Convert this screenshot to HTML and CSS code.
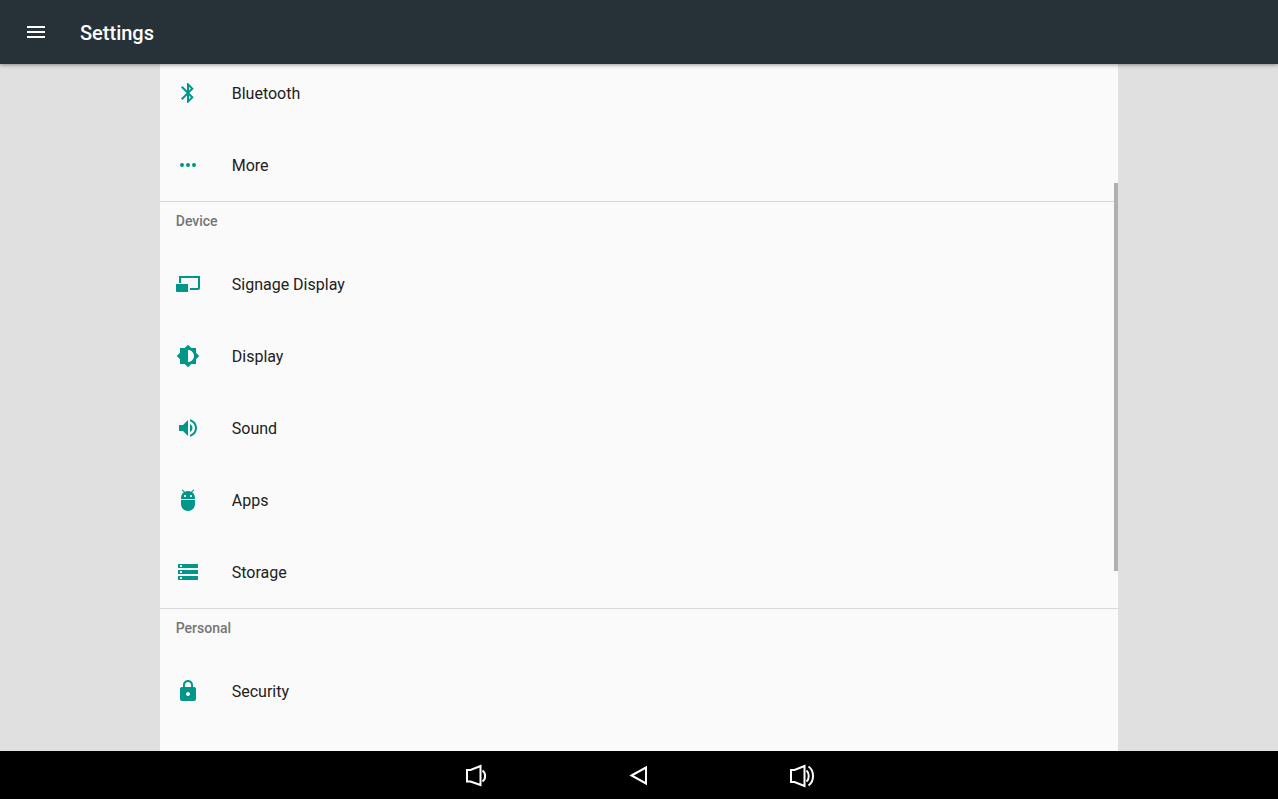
FILE: index.html
```html
<!DOCTYPE html>
<html lang="en">
<head>
    <meta charset="UTF-8">
    <meta name="viewport" content="width=device-width, initial-scale=1.0">
    <title>Settings</title>
    <link rel="stylesheet" href="styles.css">
</head>
<body>
    <header class="toolbar">
        <button class="menu-btn" type="button" aria-label="Open menu">
            <svg viewBox="0 0 24 24"><path d="M3 18h18v-2H3v2zm0-5h18v-2H3v2zm0-7v2h18V6H3z"/></svg>
        </button>
        <h1>Settings</h1>
    </header>

    <main class="content">
        <div class="panel">
            <div class="list">
                <section class="group">
                    <a class="row" href="#bluetooth">
                        <svg viewBox="0 0 24 24"><path d="M17.71 7.71L12 2h-1v7.59L6.41 5 5 6.41 10.59 12 5 17.59 6.41 19 11 14.41V22h1l5.71-5.71-4.3-4.29 4.3-4.29zM13 5.83l1.88 1.88L13 9.59V5.83zm1.88 10.46L13 18.17v-3.76l1.88 1.88z"/></svg>
                        <span>Bluetooth</span>
                    </a>
                    <a class="row" href="#more">
                        <svg viewBox="0 0 24 24"><circle cx="6" cy="12" r="2"/><circle cx="12" cy="12" r="2"/><circle cx="18" cy="12" r="2"/></svg>
                        <span>More</span>
                    </a>
                </section>

                <section class="group">
                    <h2>Device</h2>
                    <a class="row" href="#signage-display">
                        <svg viewBox="0 0 24 24"><path d="M3 4h21v12a2 2 0 0 1-2 2h-8v-2h8V6H5v5H3z"/><path d="M0 12h12v8H1a1 1 0 0 1-1-1z"/></svg>
                        <span>Signage Display</span>
                    </a>
                    <a class="row" href="#display">
                        <svg viewBox="0 0 24 24"><path d="M20 15.310L23.310 12 20 8.690V4h-4.690L12 .690 8.690 4H4v4.690L.690 12 4 15.310V20h4.690L12 23.310 15.310 20H20v-4.690zM12 18V6c3.310 0 6 2.690 6 6s-2.690 6-6 6z"/></svg>
                        <span>Display</span>
                    </a>
                    <a class="row" href="#sound">
                        <svg viewBox="0 0 24 24"><path d="M3 9v6h4l5 5V4L7 9H3zm13.500 3c0-1.770-1.020-3.290-2.500-4.030v8.050c1.480-.730 2.500-2.250 2.500-4.020zM14 3.230v2.060c2.890.860 5 3.540 5 6.710s-2.110 5.850-5 6.710v2.060c4.010-.910 7-4.490 7-8.770s-2.990-7.860-7-8.770z"/></svg>
                        <span>Sound</span>
                    </a>
                    <a class="row" href="#apps">
                        <svg viewBox="0 0 24 24"><path d="M5 16c0 3.870 3.130 7 7 7s7-3.130 7-7v-4H5v4zM16.120 4.370l2.100-2.100-.820-.830-2.300 2.310C14.160 3.280 13.120 3 12 3s-2.160.280-3.090.750L6.600 1.440l-.820.830 2.100 2.100C6.140 5.640 5 7.680 5 10v1h14v-1c0-2.320-1.140-4.360-2.880-5.630zM9 9c-.550 0-1-.450-1-1s.450-1 1-1 1 .450 1 1-.450 1-1 1zm6 0c-.550 0-1-.450-1-1s.450-1 1-1 1 .450 1 1-.450 1-1 1z"/></svg>
                        <span>Apps</span>
                    </a>
                    <a class="row" href="#storage">
                        <svg viewBox="0 0 24 24"><path d="M2 20h20v-4H2v4zm2-3h2v2H4v-2zM2 4v4h20V4H2zm4 3H4V5h2v2zm-4 7h20v-4H2v4zm2-3h2v2H4v-2z"/></svg>
                        <span>Storage</span>
                    </a>
                </section>

                <section class="group">
                    <h2>Personal</h2>
                    <a class="row" href="#security">
                        <svg viewBox="0 0 24 24"><path d="M18 8h-1V6c0-2.760-2.240-5-5-5S7 3.240 7 6v2H6c-1.100 0-2 .900-2 2v10c0 1.100.900 2 2 2h12c1.100 0 2-.900 2-2V10c0-1.100-.900-2-2-2zm-6 9c-1.100 0-2-.900-2-2s.900-2 2-2 2 .900 2 2-.900 2-2 2zm3.100-9H8.900V6c0-1.710 1.390-3.100 3.100-3.100 1.710 0 3.100 1.390 3.100 3.100v2z"/></svg>
                        <span>Security</span>
                    </a>
                </section>
            </div>
            <div class="scroll-thumb"></div>
        </div>
    </main>

    <nav class="navbar">
        <button type="button" aria-label="Volume down">
            <svg viewBox="0 0 28 28"><path d="M5 8h3.500L18.500 4v19L8.500 19.500H5z"/><path class="wave" d="M20.500 8.500c3.500 2.500 3.500 8.500 0 11"/></svg>
        </button>
        <button type="button" aria-label="Back">
            <svg viewBox="0 0 28 28"><path d="M6.500 13.500L21 5.500v16z"/></svg>
        </button>
        <button type="button" aria-label="Volume up">
            <svg viewBox="0 0 28 28"><path d="M3 8h3.500L16.500 4v20L6.500 20H3z"/><path class="wave" d="M18.500 8.500c3 2.500 3 8.500 0 11M20.500 4.500c6 4 6 15 0 19"/></svg>
        </button>
    </nav>
</body>
</html>
```

FILE: styles.css
```css
* {
    margin: 0;
    padding: 0;
    box-sizing: border-box;
}

body {
    display: flex;
    flex-direction: column;
    height: 100vh;
    overflow: hidden;
    font-family: Roboto, "Noto Sans", sans-serif;
    font-size: 16px;
    line-height: 24px;
    background: #e0e0e0;
    color: #212121;
}

button {
    border: none;
    background: none;
    cursor: pointer;
}

svg {
    display: block;
    width: 24px;
    height: 24px;
    flex: none;
}

/* Top bar */
.toolbar {
    display: flex;
    align-items: center;
    gap: 32px;
    flex: none;
    height: 64px;
    padding: 0 24px;
    background: #263238;
    color: #fff;
    box-shadow: 0 1px 4px rgba(0, 0, 0, 0.4);
    z-index: 1;
}

.menu-btn svg {
    fill: #fff;
}

.toolbar h1 {
    font-size: 20px;
    font-weight: 500;
    line-height: 28px;
    padding-top: 2px;
}

/* Settings list */
.content {
    display: flex;
    flex: 1;
    min-height: 0;
    padding: 0 12.5%;
}

.panel {
    position: relative;
    flex: 1;
    overflow: hidden;
    background: #fafafa;
}

/* list is scrolled a little past the top of its first row */
.list {
    margin-top: -7px;
}

.group + .group {
    border-top: 1px solid #d9d9d9;
}

.group h2 {
    padding: 9px 16px 17px;
    font-size: 14px;
    font-weight: 500;
    line-height: 20px;
    color: #757575;
}

.row {
    display: flex;
    align-items: center;
    gap: 32px;
    height: 72px;
    padding: 0 16px;
    color: inherit;
    text-decoration: none;
}

.row span {
    padding-top: 2px;
}

.row svg {
    fill: #009688;
}

.scroll-thumb {
    position: absolute;
    top: 17.3%;
    right: 0;
    width: 4px;
    height: 56.5%;
    background: #b0b0b0;
}

/* System navigation */
.navbar {
    display: flex;
    justify-content: center;
    gap: 115px;
    flex: none;
    height: 48px;
    padding-top: 2px;
    background: #000;
    z-index: 1;
}

.navbar button {
    display: flex;
    align-items: center;
    justify-content: center;
    width: 48px;
}

.navbar svg {
    width: 28px;
    height: 28px;
    fill: none;
    stroke: #fff;
    stroke-width: 2;
}
```
